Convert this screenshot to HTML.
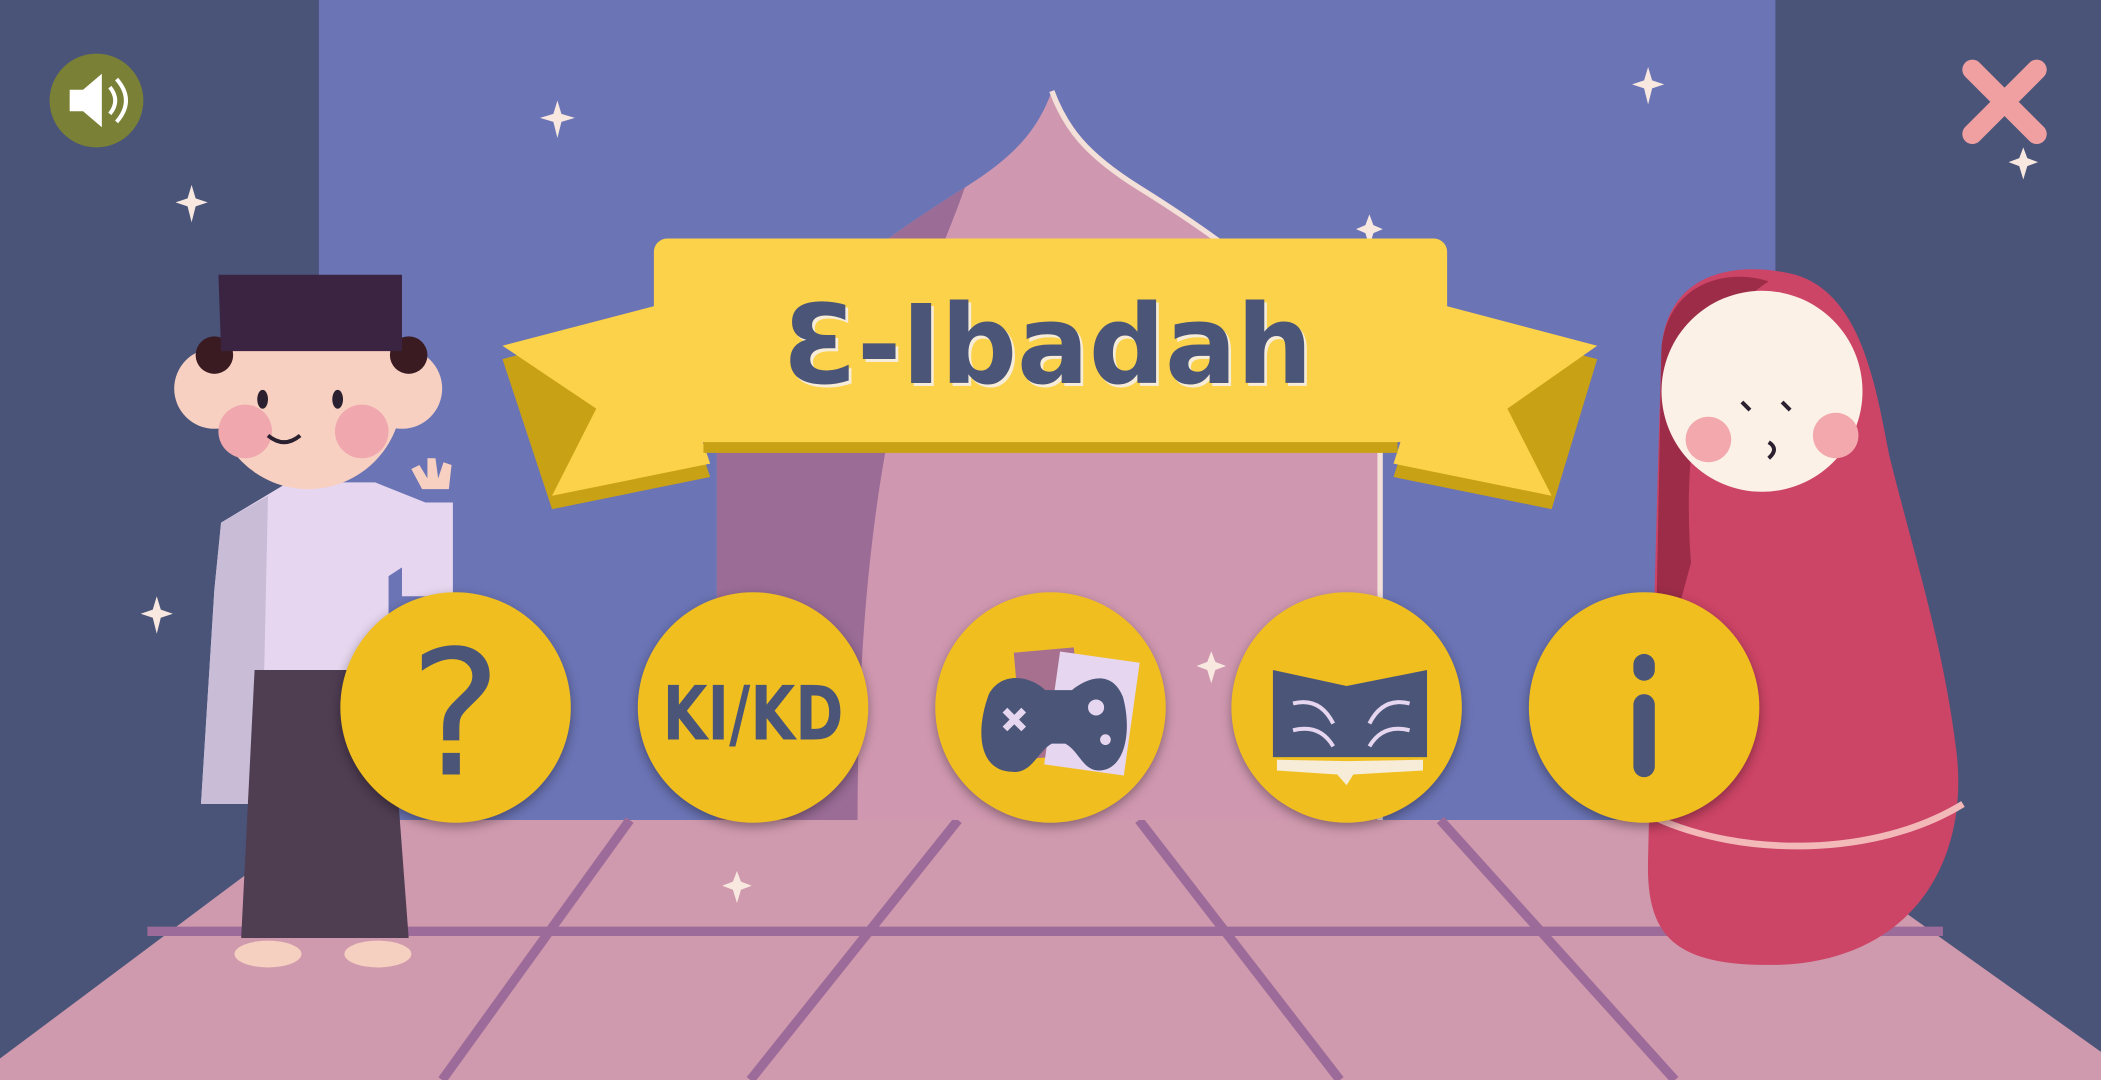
<!DOCTYPE html>
<html><head><meta charset="utf-8"><style>
html,body{margin:0;padding:0;width:2101px;height:1080px;overflow:hidden;background:#6b74b5}
svg{display:block}
</style></head><body>
<svg width="2101" height="1080" viewBox="0 0 1568 806" preserveAspectRatio="none" xmlns="http://www.w3.org/2000/svg">
<rect width="1568" height="806" fill="#6b74b5"/>
<rect x="0" y="0" width="238" height="806" fill="#4a5479"/>
<rect x="1325" y="0" width="243" height="806" fill="#4a5479"/>
<polygon points="238,612 1325,612 1568,785 1568,806 0,806 0,790" fill="#d09aae"/>
<g stroke="#9d6b99" stroke-width="7" fill="none">
<line x1="110" y1="695" x2="1450" y2="695"/>
<line x1="470" y1="612" x2="330" y2="806"/>
<line x1="715" y1="612" x2="560" y2="806"/>
<line x1="850" y1="612" x2="1000" y2="806"/>
<line x1="1075" y1="612" x2="1250" y2="806"/>
</g>
<path d="M535,612 L535,330 C560,250 640,190 720,140 C760,115 775,95 785,68 C795,95 810,115 850,140 C930,190 1010,250 1030,330 L1030,612 Z" fill="#d098b0"/>
<path d="M535,612 L535,330 C560,250 640,190 720,140 C700,200 640,300 640,612 Z" fill="#9a6c96"/>
<path d="M785,68 C795,95 810,115 850,140 C930,190 1010,250 1030,330 L1030,612" fill="none" stroke="#f3e0d8" stroke-width="4"/>
<g fill="#f8e8e0">
<path d="M416,75 l3,10 10,3 -10,3 -3,12 -3,-12 -10,-3 10,-3z"/>
<path d="M143,138 l3,10 9,3 -9,3 -3,12 -3,-12 -9,-3 9,-3z"/>
<path d="M117,445 l3,10 9,3 -9,3 -3,12 -3,-12 -9,-3 9,-3z"/>
<path d="M1230,50 l3,10 9,3 -9,3 -3,12 -3,-12 -9,-3 9,-3z"/>
<path d="M1510,110 l3,8 8,3 -8,3 -3,10 -3,-10 -8,-3 8,-3z"/>
<path d="M1022,160 l3,8 7,3 -7,3 -3,10 -3,-10 -7,-3 7,-3z"/>
<path d="M904,486 l3,8 8,3 -8,3 -3,10 -3,-10 -8,-3 8,-3z"/>
<path d="M550,650 l3,8 8,3 -8,3 -3,10 -3,-10 -8,-3 8,-3z"/>
</g>
<polygon points="375,268 490,238 530,356 412,380" fill="#c9a114"/>
<polygon points="375,258 490,228 530,346 412,370 445,305" fill="#fcd24a"/>
<polygon points="1192,268 1078,238 1040,356 1158,380" fill="#c9a114"/>
<polygon points="1192,258 1078,228 1040,346 1158,370 1125,305" fill="#fcd24a"/>
<rect x="525" y="300" width="518" height="38" fill="#c9a114"/>
<rect x="488" y="178" width="592" height="152" rx="10" fill="#fcd24a"/>
<g font-family="DejaVu Sans, sans-serif" font-size="82" font-weight="bold" text-anchor="middle" textLength="395">
<text x="784" y="288" fill="#f6ecd8" textLength="395" lengthAdjust="spacingAndGlyphs">Ɛ-Ibadah</text>
<text x="782" y="286" fill="#4a5578" textLength="395" lengthAdjust="spacingAndGlyphs">Ɛ-Ibadah</text>
</g>
<g>
<path d="M165,390 L215,360 L280,360 L330,380 L336,400 L290,430 L290,520 L300,600 L150,600 L160,440 Z" fill="#e6d6ef"/>
<path d="M165,390 L200,370 L195,600 L150,600 L160,440Z" fill="#c9bcd6"/>
<rect x="300" y="375" width="38" height="70" fill="#e6d6ef"/>
<path d="M190,500 L290,500 L305,700 L180,700 Z" fill="#4f3d52"/>
<ellipse cx="200" cy="712" rx="25" ry="10" fill="#f5cfc0"/>
<ellipse cx="282" cy="712" rx="25" ry="10" fill="#f5cfc0"/>
<circle cx="230" cy="295" r="70" fill="#f8d0c2"/>
<circle cx="160" cy="290" r="30" fill="#f8d0c2"/>
<circle cx="300" cy="290" r="30" fill="#f8d0c2"/>
<circle cx="160" cy="265" r="14" fill="#3b1b22"/>
<circle cx="305" cy="265" r="14" fill="#3b1b22"/>
<circle cx="183" cy="322" r="20" fill="#f0a7ad"/>
<circle cx="270" cy="322" r="20" fill="#f0a7ad"/>
<ellipse cx="196" cy="298" rx="4" ry="7" fill="#2b2030"/>
<ellipse cx="252" cy="298" rx="4" ry="7" fill="#2b2030"/>
<path d="M200,325 q12,10 24,0" stroke="#2b2030" stroke-width="3" fill="none"/>
<path d="M163,205 L300,205 L300,262 L165,262 Z" fill="#3b2442"/>
<path d="M315,365 l-8,-15 6,-3 6,10 0,-15 6,0 2,15 4,-12 6,2 -2,18z" fill="#f8d0c2"/>
</g>
<g>
<path d="M1240,260 C1245,200 1300,195 1340,205 C1390,220 1400,290 1410,340 C1430,420 1450,480 1460,560 C1470,640 1430,715 1330,720 C1250,722 1228,700 1230,640 C1232,560 1235,420 1240,260Z" fill="#cc4466"/>
<path d="M1240,260 C1245,210 1290,200 1320,210 C1270,240 1255,330 1262,420 L1235,520 Z" fill="#9c2c48"/>
<path d="M1235,610 C1300,640 1400,640 1465,600" stroke="#f3b8b8" stroke-width="5" fill="none"/>
<circle cx="1315" cy="292" r="75" fill="#fbf1e6"/>
<circle cx="1275" cy="328" r="17" fill="#f2a8ad"/>
<circle cx="1370" cy="325" r="17" fill="#f2a8ad"/>
<path d="M1300,300 l6,6 M1330,300 l6,6" stroke="#2b2030" stroke-width="3"/>
<path d="M1320,330 q8,5 0,12" stroke="#2b2030" stroke-width="3" fill="none"/>
</g>
<g fill="#f0bf1f" style="filter:drop-shadow(0 3px 4px rgba(0,0,0,.35))">
<circle cx="340" cy="528" r="86"/>
<circle cx="562" cy="528" r="86"/>
<circle cx="784" cy="528" r="86"/>
<circle cx="1005" cy="528" r="86"/>
<circle cx="1227" cy="528" r="86"/>
</g>
<g fill="#4a5578" font-family="DejaVu Sans, sans-serif" text-anchor="middle">
<text x="340" y="578" font-size="130">?</text>
<text x="562" y="552" font-size="56" font-weight="bold" textLength="135" lengthAdjust="spacingAndGlyphs">KI/KD</text>
</g>
<rect x="1219" y="488" width="16" height="20" rx="8" fill="#4a5578"/>
<rect x="1219" y="518" width="16" height="62" rx="8" fill="#4a5578"/>
<rect x="760" y="485" width="45" height="80" fill="#a7708f" transform="rotate(-5 782 525)"/>
<rect x="785" y="490" width="60" height="85" fill="#e6d6ef" transform="rotate(8 815 532)"/>
<path d="M738,518 C748,500 770,505 780,515 L800,515 C812,505 830,500 838,520 C845,545 840,575 820,575 C808,575 805,560 795,555 L785,555 C775,560 770,578 755,576 C730,575 728,545 738,518Z" fill="#4a5578"/>
<path d="M750,530 l14,14 M764,530 l-14,14" stroke="#e6d6ef" stroke-width="5"/>
<circle cx="818" cy="528" r="6" fill="#e6d6ef"/><circle cx="825" cy="552" r="4" fill="#e6d6ef"/>
<path d="M950,500 L1005,512 L1065,500 L1065,565 L1005,565 L950,565Z" fill="#4a5578"/>
<path d="M953,567 L1005,568 L1062,567 L1062,575 L1010,578 L1005,586 L998,578 L953,575Z" fill="#f6ecd8"/>
<g stroke="#e6d6ef" stroke-width="3" fill="none">
<path d="M965,525 q20,-5 30,15 M965,545 q20,-5 30,12 M1052,525 q-20,-5 -30,15 M1052,545 q-20,-5 -30,12"/>
</g>
<circle cx="72" cy="75" r="35" fill="#7a8035"/>
<path d="M52,67 L62,67 L76,55 L76,95 L62,83 L52,83Z" fill="#fff"/>
<path d="M82,65 q8,10 0,20 M87,59 q14,16 0,32" stroke="#fff" stroke-width="3" fill="none"/>
<path d="M1472,52 L1520,100 M1520,52 L1472,100" stroke="#f0a0a0" stroke-width="15" stroke-linecap="round"/>
</svg>
</body></html>
